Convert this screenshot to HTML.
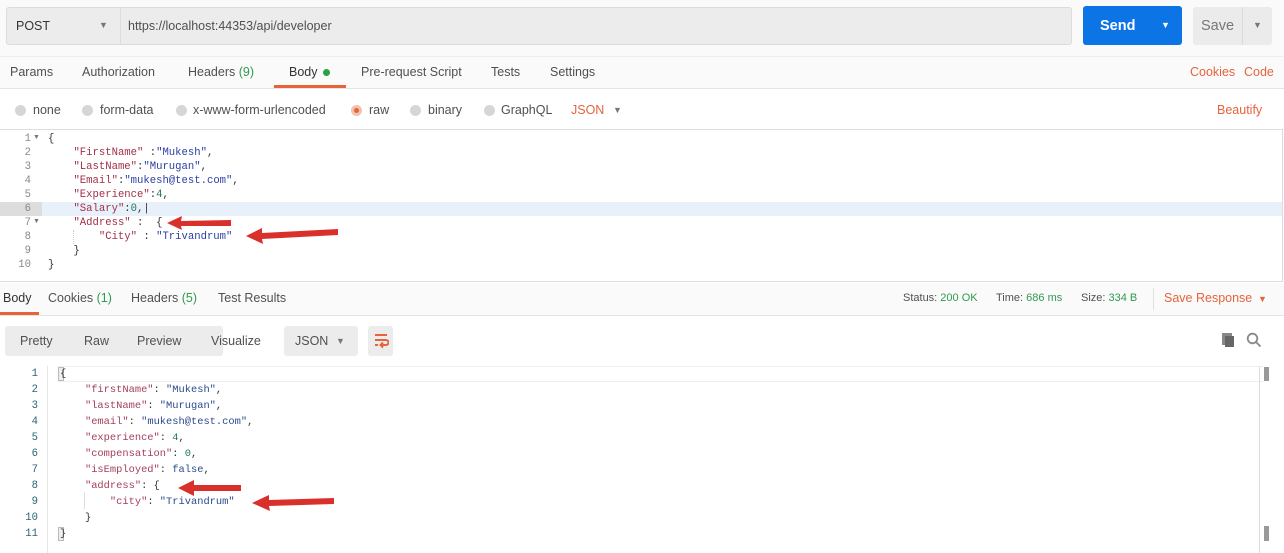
<!DOCTYPE html>
<html><head><meta charset="utf-8">
<style>
*{margin:0;padding:0;box-sizing:border-box}
body{width:1284px;height:553px;overflow:hidden;background:#fff;font-family:"Liberation Sans",sans-serif;font-size:12.5px;color:#505050;position:relative}
.a{position:absolute;white-space:nowrap}
.m{font-family:"Liberation Mono",monospace;font-size:10.6px}
.k{color:#a3304a}.v{color:#2c3ea6}.n{color:#1d7a5a}
.rk{color:#a4405a}.rv{color:#2b4a8e}
.g{color:#2f9a50}.o{color:#e5643a}
.rad{position:absolute;width:11px;height:11px;border-radius:50%;background:#d6d6d6}
</style></head><body>
<div class="a" style="left:0;top:0;width:1284px;height:56px;background:#fafafa"></div>
<div class="a" style="left:6px;top:7px;width:1066px;height:38px;background:#ececec;border:1px solid #dcdcdc;border-radius:3px"></div>
<div class="a" style="left:120px;top:8px;width:1px;height:36px;background:#dcdcdc"></div>
<div class="a" style="left:16px;top:19px;font-size:12.5px;color:#333">POST</div>
<div class="a" style="left:99px;top:20px;font-size:9px;color:#777">▼</div>
<div class="a" style="left:128px;top:19px;font-size:12.5px;color:#505050">https://localhost:44353/api/developer</div>
<div class="a" style="left:1083px;top:6px;width:99px;height:39px;background:#0d74e5;border-radius:3px"></div>
<div class="a" style="left:1100px;top:18px;font-size:14.5px;font-weight:bold;color:#fff">Send</div>
<div class="a" style="left:1161px;top:20px;font-size:9px;color:#fff">▼</div>
<div class="a" style="left:1193px;top:7px;width:79px;height:38px;background:#ebebeb;border-radius:3px"></div>
<div class="a" style="left:1242px;top:7px;width:1px;height:38px;background:#dadada"></div>
<div class="a" style="left:1201px;top:18px;font-size:14.5px;color:#777">Save</div>
<div class="a" style="left:1253px;top:20px;font-size:9px;color:#777">▼</div>

<div class="a" style="left:0;top:56px;width:1284px;height:33px;background:#fafafa;border-top:1px solid #eee;border-bottom:1px solid #e4e4e4"></div>
<div class="a" style="left:10px;top:65px">Params</div>
<div class="a" style="left:82px;top:65px">Authorization</div>
<div class="a" style="left:188px;top:65px">Headers <span class="g">(9)</span></div>
<div class="a" style="left:289px;top:65px;color:#333">Body</div>
<div class="a" style="left:323px;top:69px;width:7px;height:7px;border-radius:50%;background:#27a244"></div>
<div class="a" style="left:274px;top:85px;width:72px;height:3px;background:#e5643a"></div>
<div class="a" style="left:361px;top:65px">Pre-request Script</div>
<div class="a" style="left:491px;top:65px">Tests</div>
<div class="a" style="left:550px;top:65px">Settings</div>
<div class="a o" style="left:1190px;top:65px">Cookies</div>
<div class="a o" style="left:1244px;top:65px">Code</div>

<div class="rad" style="left:15px;top:105px"></div><div class="a" style="left:33px;top:103px">none</div>
<div class="rad" style="left:82px;top:105px"></div><div class="a" style="left:100px;top:103px">form-data</div>
<div class="rad" style="left:176px;top:105px"></div><div class="a" style="left:193px;top:103px">x-www-form-urlencoded</div>
<div class="rad" style="left:351px;top:105px;background:#f0c3b0"></div><div class="a" style="left:354px;top:108px;width:5px;height:5px;border-radius:50%;background:#e5643a"></div><div class="a" style="left:369px;top:103px">raw</div>
<div class="rad" style="left:410px;top:105px"></div><div class="a" style="left:428px;top:103px">binary</div>
<div class="rad" style="left:484px;top:105px"></div><div class="a" style="left:501px;top:103px">GraphQL</div>
<div class="a o" style="left:571px;top:103px">JSON</div>
<div class="a" style="left:613px;top:105px;font-size:9px;color:#777">▼</div>
<div class="a o" style="left:1217px;top:103px">Beautify</div>

<div class="a" style="left:0;top:129px;width:1283px;height:153px;border:1px solid #ddd;border-left:none;background:#fff"></div>
<div class="a" style="left:42px;top:202px;width:1240px;height:14px;background:#e8f0fa"></div>
<div class="a" style="left:0;top:202px;width:42px;height:14px;background:#ddd"></div>
<div class="a m" style="left:0;top:132px;width:31px;text-align:right;line-height:14px;color:#888">1<br>2<br>3<br>4<br>5<br>6<br>7<br>8<br>9<br>10</div>
<div class="a" style="left:33px;top:134px;font-size:7px;color:#777">▼</div>
<div class="a" style="left:33px;top:218px;font-size:7px;color:#777">▼</div>
<div class="a" style="left:73px;top:230px;width:0;height:14px;border-left:1px dotted #ccc"></div>
<div class="a m" style="left:48px;top:132px;line-height:14px;color:#333;white-space:pre">{
    <span class="k">"FirstName"</span> :<span class="v">"Mukesh"</span>,
    <span class="k">"LastName"</span>:<span class="v">"Murugan"</span>,
    <span class="k">"Email"</span>:<span class="v">"mukesh@test.com"</span>,
    <span class="k">"Experience"</span>:<span class="n">4</span>,
    <span class="k">"Salary"</span>:<span class="n">0</span>,|
    <span class="k">"Address"</span> :  {
        <span class="k">"City"</span> : <span class="v">"Trivandrum"</span>
    }
}</div>

<div class="a" style="left:0;top:283px;width:1284px;height:33px;background:#fafafa;border-bottom:1px solid #e4e4e4"></div>
<div class="a" style="left:3px;top:291px;color:#333">Body</div>
<div class="a" style="left:0;top:312px;width:39px;height:3px;background:#e5643a"></div>
<div class="a" style="left:48px;top:291px">Cookies <span class="g">(1)</span></div>
<div class="a" style="left:131px;top:291px">Headers <span class="g">(5)</span></div>
<div class="a" style="left:218px;top:291px">Test Results</div>
<div class="a" style="left:903px;top:292px;font-size:11px">Status: <span class="g">200 OK</span></div>
<div class="a" style="left:996px;top:292px;font-size:11px">Time: <span class="g">686 ms</span></div>
<div class="a" style="left:1081px;top:292px;font-size:11px">Size: <span class="g">334 B</span></div>
<div class="a" style="left:1153px;top:288px;width:1px;height:22px;background:#e0e0e0"></div>
<div class="a o" style="left:1164px;top:291px">Save Response</div>
<div class="a o" style="left:1258px;top:294px;font-size:9px">▼</div>

<div class="a" style="left:5px;top:326px;width:218px;height:30px;background:#ececec;border-radius:3px"></div>
<div class="a" style="left:20px;top:334px">Pretty</div>
<div class="a" style="left:84px;top:334px">Raw</div>
<div class="a" style="left:137px;top:334px">Preview</div>
<div class="a" style="left:211px;top:334px">Visualize</div>
<div class="a" style="left:284px;top:326px;width:74px;height:30px;background:#ececec;border-radius:3px"></div>
<div class="a" style="left:295px;top:334px">JSON</div>
<div class="a" style="left:336px;top:336px;font-size:9px;color:#777">▼</div>
<div class="a" style="left:368px;top:326px;width:25px;height:30px;background:#ececec;border-radius:3px"></div>
<svg class="a" style="left:373px;top:332px" width="16" height="18" viewBox="0 0 16 18" fill="none" stroke="#e5643a" stroke-width="2"><path d="M2 3h12M2 8h11a2.5 2.5 0 0 1 0 5H8M10 10.5l-2.5 2.5 2.5 2.5M2 13h3"/></svg>
<div class="a" style="left:1222px;top:333px;width:10px;height:12px;background:#888"></div>
<div class="a" style="left:1225px;top:336px;width:9px;height:11px;background:#666"></div>
<svg class="a" style="left:1246px;top:332px" width="16" height="16" viewBox="0 0 16 16" fill="none" stroke="#888" stroke-width="1.8"><circle cx="6.5" cy="6.5" r="4.8"/><path d="M10 10l4.5 4.5"/></svg>

<div class="a" style="left:58px;top:366px;width:1205px;height:16px;border:1px solid #eee;border-right:none"></div>
<div class="a" style="left:47px;top:366px;width:1px;height:187px;background:#e6e6e6"></div>
<div class="a" style="left:1259px;top:366px;width:1px;height:187px;background:#ddd"></div>
<div class="a" style="left:1264px;top:367px;width:5px;height:14px;background:#999"></div>
<div class="a" style="left:1264px;top:526px;width:5px;height:15px;background:#999"></div>
<div class="a" style="left:84px;top:492px;width:1px;height:17px;background:#ddd"></div>
<div class="a" style="left:58px;top:367px;width:6px;height:14px;border:1px solid #bbb;background:#eee"></div>
<div class="a" style="left:58px;top:527px;width:6px;height:14px;border:1px solid #bbb;background:#eee"></div>
<div class="a m" style="left:0;top:366px;width:38px;text-align:right;line-height:16px;color:#2a6478">1<br>2<br>3<br>4<br>5<br>6<br>7<br>8<br>9<br>10<br>11</div>
<div class="a m" style="left:60px;top:366px;line-height:16px;color:#333;white-space:pre;font-size:10.4px">{
    <span class="rk">"firstName"</span>: <span class="rv">"Mukesh"</span>,
    <span class="rk">"lastName"</span>: <span class="rv">"Murugan"</span>,
    <span class="rk">"email"</span>: <span class="rv">"mukesh@test.com"</span>,
    <span class="rk">"experience"</span>: <span class="n">4</span>,
    <span class="rk">"compensation"</span>: <span class="n">0</span>,
    <span class="rk">"isEmployed"</span>: <span class="rv">false</span>,
    <span class="rk">"address"</span>: {
        <span class="rk">"city"</span>: <span class="rv">"Trivandrum"</span>
    }
}</div>

<svg class="a" style="left:0;top:0" width="1284" height="553" fill="#d9302c">
<path d="M167 223 L182 216 L181 221 L231 220 L231 226 L181 226 L182 230 Z"/>
<path d="M246 236 L262 228 L262 233 L338 229 L338 235 L262 239 L263 244 Z"/>
<path d="M178 488 L194 480 L194 485 L241 485 L241 491 L194 491 L194 496 Z"/>
<path d="M252 503 L269 495 L269 500 L334 498 L334 504 L269 506 L270 511 Z"/>
</svg>
</body></html>
